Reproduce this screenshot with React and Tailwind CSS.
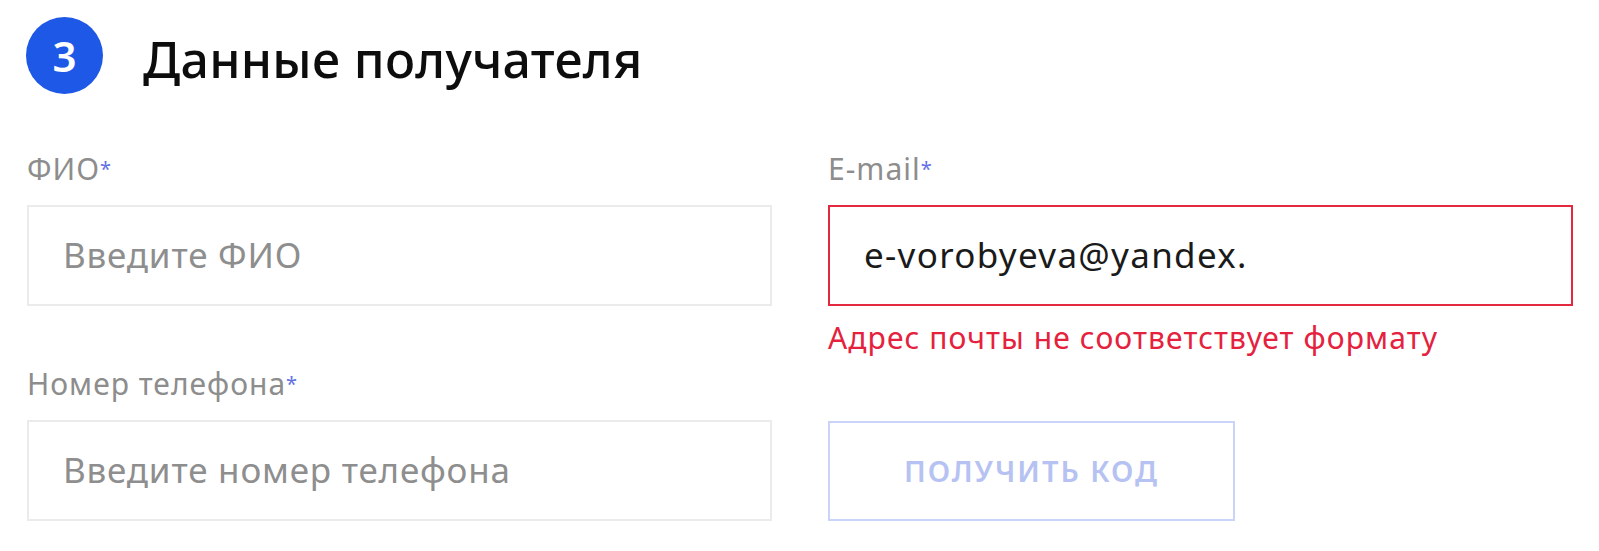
import React from "react";

const Label = ({ children }) => (
  <label className="block text-[30px] leading-[36px] tracking-[1px] text-[#8d8d8d] mb-[18px]">
    {children}
    <span className="text-[#6170e6] text-[20px] align-top">*</span>
  </label>
);

const Field = ({ label, placeholder, value, error }) => (
  <div className="flex flex-col">
    <Label>{label}</Label>
    <div
      className={`h-[101px] flex items-center px-[34px] border-2 ${
        error ? "border-[#e3283f]" : "border-[#ebebeb]"
      }`}
    >
      {value ? (
        <span className="text-[35px] tracking-[1.3px] text-[#1a1a1a]">{value}</span>
      ) : (
        <span className="text-[35px] tracking-[0.8px] text-[#8e8e8e]">{placeholder}</span>
      )}
    </div>
    {error && (
      <p className="mt-[14px] text-[30px] leading-[36px] tracking-[1.1px] text-[#e5213d]">
        {error}
      </p>
    )}
  </div>
);

export default function App() {
  return (
    <main className="bg-white w-[1599px] h-[551px] overflow-hidden font-['Noto_Sans',sans-serif]">
      {/* Step header */}
      <div className="flex items-center pl-[26px] pt-[17px]">
        <div className="w-[77px] h-[77px] rounded-full bg-[#1e58e6] flex items-center justify-center">
          <span className="text-white text-[42px] font-semibold leading-none">3</span>
        </div>
        <h2 className="ml-[40px] mt-[6px] text-[50px] font-medium tracking-[0.3px] text-[#0d0d0d] leading-none">
          Данные получателя
        </h2>
      </div>

      {/* Form */}
      <section className="grid grid-cols-[745px_745px] gap-x-[56px] gap-y-[10px] pl-[27px] pt-[57px]">
        <Field label="ФИО" placeholder="Введите ФИО" />
        <Field
          label="E-mail"
          value="e-vorobyeva@yandex."
          error="Адрес почты не соответствует формату"
        />
        <Field label="Номер телефона" placeholder="Введите номер телефона" />
        <div className="flex items-end">
          <button className="w-[407px] h-[100px] border-2 border-[#cad4fb] text-[#b6c2f2] text-[29px] font-semibold tracking-[2px] uppercase">
            Получить код
          </button>
        </div>
      </section>
    </main>
  );
}
